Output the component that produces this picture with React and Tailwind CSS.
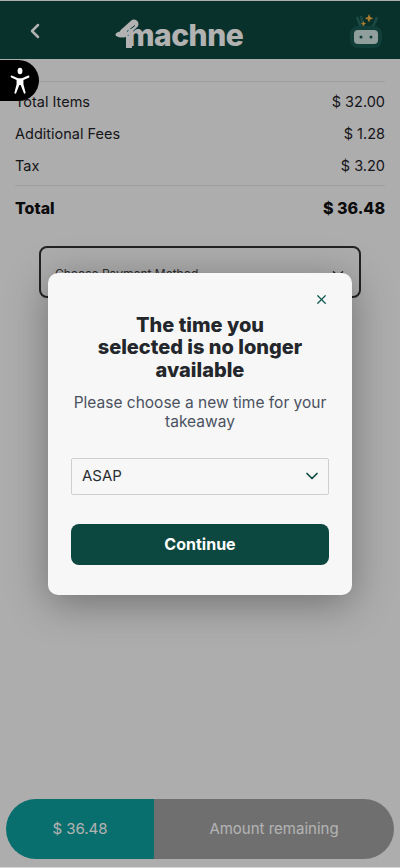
import { X, ChevronDown, ChevronLeft } from "lucide-react";

const font = "font-['Inter','Noto_Sans',sans-serif]";

const SummaryRow = ({ label, value }) => (
  <div className="flex h-8 items-center justify-between pt-[1px] text-[14.500px] text-[#1f2328]">
    <span>{label}</span>
    <span>{value}</span>
  </div>
);

const ChefLogo = () => (
  <div className="mt-[5px] flex items-end">
    <svg width="26" height="32" viewBox="0 0 26 32" className="-mr-[14px] mb-[1px] shrink-0">
      <ellipse cx="6" cy="17.500" rx="5.500" ry="3" fill="#fff" />
      <path d="M9 16L19 7" stroke="#fff" strokeWidth="9" strokeLinecap="round" fill="none" />
      <path d="M11 19h5l1 12h-6z" fill="#fff" />
      <path d="M12 14.500l8-6" stroke="#0c4740" strokeWidth="1" fill="none" />
    </svg>
    <span className="text-[30px] leading-[30px] font-extrabold tracking-[-0.500px] text-white">machne</span>
  </div>
);

const BotIcon = () => (
  <svg width="34" height="36" viewBox="0 0 34 36">
    <path d="M8 4l5 13M12 3l3 12M28 4c-1 4-3 8-6 12" stroke="#2a6b63" strokeWidth="2.500" fill="none" />
    <rect x="1" y="13" width="32" height="22" rx="8" fill="#1a5a54" />
    <rect x="5" y="17" width="24" height="14" rx="4" fill="#cfe3e0" />
    <circle cx="12" cy="24" r="1.500" fill="#1a5a54" />
    <circle cx="22" cy="24" r="1.500" fill="#1a5a54" />
    <path d="M20 1l1.300 3 3 1.200-3 1.300-1.300 3-1.200-3-3-1.300 3-1.200z" fill="#f5b042" />
    <path d="M14.500 8l.8 1.800 1.800.8-1.800.8-.8 1.800-.8-1.800-1.800-.8 1.800-.8z" fill="#f5b042" />
  </svg>
);

const AccessIcon = () => (
  <svg width="22" height="29" viewBox="0 0 32 32" preserveAspectRatio="none" fill="#fff">
    <circle cx="16" cy="5.500" r="3.500" />
    <path d="M4 10.500c-.8-.3-1.500.2-1.600.9-.1.600.2 1.200.8 1.400l7.800 2.600v4.600L8 29c-.2.700.2 1.400.9 1.600.7.200 1.300-.1 1.600-.8L15 21h2l4.500 8.800c.3.700.9 1 1.600.8.700-.2 1.100-.9.900-1.600l-3-8.900v-4.600l7.800-2.600c.6-.2.900-.8.800-1.400-.1-.7-.8-1.200-1.600-.9l-7.500 2.300c-1.500.4-3 .6-4.500.6s-3-.2-4.500-.6z" />
  </svg>
);

const App = () => {
  return (
    <div className={`relative flex h-[868px] flex-col overflow-hidden bg-[#f8f8f8] ${font}`}>
      <header className="mt-px flex h-[58px] shrink-0 items-center justify-between bg-[#0c4740] pt-[2px] pr-[17px] pl-[23px]">
        <ChevronLeft size={24} color="#fff" strokeWidth={2.500} />
        <div className="mr-[38px]">
          <ChefLogo />
        </div>
        <BotIcon />
      </header>

      <main className="flex-1 px-[15px] pt-[22px]">
        <div className="border-t border-[#e2e2e2] pt-[3px] pb-[4px]">
          <SummaryRow label="Total Items" value="$ 32.00" />
          <SummaryRow label="Additional Fees" value="$ 1.28" />
          <SummaryRow label="Tax" value="$ 3.20" />
        </div>
        <div className="flex h-[44px] items-center justify-between border-t border-[#e2e2e2] text-[16px] font-extrabold text-[#111]">
          <span>Total</span>
          <span>$ 36.48</span>
        </div>
        <div className="mx-[24px] mt-[17px] flex h-[52px] items-center justify-between rounded-[8px] border-2 border-[#333] pt-[3px] pr-[12px] pl-[14px] text-[12px] text-[#444]">
          <span>Choose Payment Method</span>
          <ChevronDown size={18} color="#333" />
        </div>
      </main>

      <footer className="px-[6px] pb-[9px]">
        <div className="flex h-[60px] overflow-hidden rounded-[30px] text-[15px] text-white">
          <div className="flex w-[148px] items-center justify-center bg-[#0c9e9e]">$ 36.48</div>
          <div className="flex flex-1 items-center justify-center bg-[#a0a0a0]">Amount remaining</div>
        </div>
      </footer>

      <div className="absolute inset-0 flex items-center justify-center bg-black/30">
        <div className="w-[304px] rounded-[10px] bg-[#f7f7f7] px-[23px] pt-[19px] pb-[30px] shadow-[0_8px_40px_rgba(0,0,0,0.35)]">
          <div className="flex justify-end pr-[1px]">
            <X size={15} color="#0c5a52" strokeWidth={2} className="-mr-[1px]" />
          </div>
          <h2 className="mx-auto mt-[7px] w-[212px] text-center text-[20px] leading-[22.500px] font-extrabold text-[#23262b]">
            The time you selected is no longer available
          </h2>
          <p className="mx-auto mt-[12px] text-center text-[15.500px] leading-[19px] text-[#4a5160]">
            Please choose a new time for your takeaway
          </p>
          <div className="mt-[27px] flex h-[37px] items-center justify-between rounded-[2px] border border-[#cfcfcf] pr-[6px] pb-[2px] pl-[10px] text-[15px] text-[#2b2f33]">
            <span>ASAP</span>
            <ChevronDown size={20} color="#0c4740" strokeWidth={2} />
          </div>
          <button type="button" className="mt-[29px] h-[41px] w-full rounded-[8px] bg-[#0c4740] pb-[2px] text-[16px] font-bold text-white">
            Continue
          </button>
        </div>
      </div>

      <div className="absolute top-[60px] left-0 flex h-[41px] w-[39px] items-center justify-center rounded-r-full bg-black">
        <AccessIcon />
      </div>

      <div className="absolute inset-x-0 bottom-0 h-px bg-[#d8d8d8]" />
    </div>
  );
};

export default App;
